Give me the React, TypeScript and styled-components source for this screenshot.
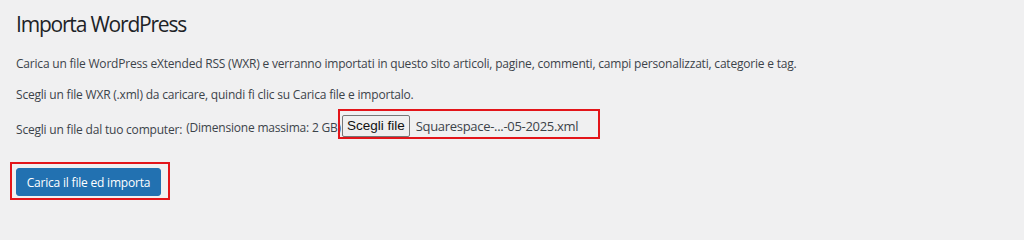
import React from 'react';
import styled, { createGlobalStyle } from 'styled-components';

const GlobalStyle = createGlobalStyle`
  html, body {
    margin: 0;
    padding: 0;
    background: #f0f0f1;
  }
  body {
    font-family: "Open Sans", "Noto Sans", sans-serif;
    color: #3c434a;
  }
`;

const Wrap = styled.div`
  width: 1024px;
  height: 219px;
  box-sizing: border-box;
  padding: 6px 16px 0 16px;
  overflow: hidden;
`;

const Title = styled.h1`
  margin: 0;
  font-size: 21px;
  letter-spacing: -1.2px;
  font-weight: 400;
  line-height: 36px;
  color: #1d2327;
`;

const Text = styled.p<{ $top: number }>`
  margin: ${p => p.$top}px 0 0 0;
  font-size: 12px;
  letter-spacing: -0.2px;
  line-height: 18px;
`;

const UploadRow = styled.div`
  display: flex;
  align-items: center;
  margin-top: 5px;
  font-size: 12px;
  letter-spacing: -0.2px;
`;

const Label = styled.span<{ $drop: number }>`
  padding-top: ${p => p.$drop * 2}px;
  margin-right: 4px;
`;

const Highlight = styled.div`
  border: 2px solid #e3151a;
  display: inline-flex;
  align-items: center;
`;

const FileBox = styled(Highlight)`
  margin-left: -7px;
  padding: 4px 20px 0 2px;
  gap: 6px;
`;

const ChooseButton = styled.button`
  font-family: "Liberation Sans", Arial, sans-serif;
  font-size: 13.5px;
  color: #111;
  background: #efefef;
  border: 1px solid #767676;
  border-radius: 2px;
  padding: 0 4px;
  height: 22px;
  line-height: 20px;
`;

const FileName = styled.span`
  font-size: 13px;
  letter-spacing: -0.3px;
  color: #3c434a;
`;

const SubmitBox = styled(Highlight)`
  margin: 23px 0 0 -6px;
  padding: 4px 7px 2px 4px;
`;

const Submit = styled.button`
  font-family: "Open Sans", "Noto Sans", sans-serif;
  font-size: 12px;
  letter-spacing: -0.2px;
  color: #fff;
  background: #2271b1;
  border: 1px solid #2271b1;
  border-radius: 3px;
  height: 28px;
  width: 145px;
  padding: 0;
`;

export default function App() {
  return (
    <>
      <GlobalStyle />
      <Wrap>
        <Title>Importa WordPress</Title>
        <Text $top={13}>
          Carica un file WordPress eXtended RSS (WXR) e verranno importati in questo sito articoli, pagine, commenti, campi personalizzati, categorie e tag.
        </Text>
        <Text $top={13}>
          Scegli un file WXR (.xml) da caricare, quindi fi clic su Carica file e importalo.
        </Text>
        <UploadRow>
          <Label $drop={5}>Scegli un file dal tuo computer:</Label>
          <Label $drop={3}>(Dimensione massima: 2 GB)</Label>
          <FileBox>
            <ChooseButton>Scegli file</ChooseButton>
            <FileName>Squarespace-...-05-2025.xml</FileName>
          </FileBox>
        </UploadRow>
        <SubmitBox>
          <Submit>Carica il file ed importa</Submit>
        </SubmitBox>
      </Wrap>
    </>
  );
}
